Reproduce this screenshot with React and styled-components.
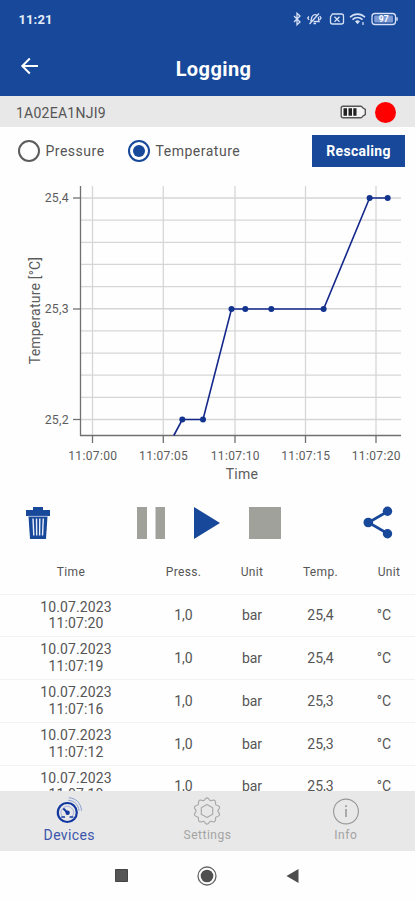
import React, { useState } from 'react';
import styled, { createGlobalStyle, ThemeProvider } from 'styled-components';

const theme = {
  blue: '#174899',
  line: '#14288c',
  grey: '#e8e8e8',
  disabled: '#a1a19c',
  muted: '#a3a3a3',
  text: '#555',
};

const GlobalStyle = createGlobalStyle`
  * {
    box-sizing: border-box;
  }

  body {
    margin: 0;
    background: #fefefe;
    font-family: Roboto, 'Liberation Sans', sans-serif;
    color: ${theme.text};
  }

  button {
    padding: 0;
    border: 0;
    background: none;
    font-family: inherit;
    color: inherit;
    cursor: pointer;
  }

  svg {
    display: block;
  }
`;

const Screen = styled.div`
  display: flex;
  flex-direction: column;
  width: 415px;
  height: 900px;
  overflow: hidden;
`;

// Header
const Header = styled.header`
  flex: 0 0 96px;
  background: ${({ theme }) => theme.blue};
  color: #fff;
`;

const StatusBar = styled.div`
  display: flex;
  align-items: center;
  justify-content: space-between;
  height: 38px;
  padding: 0 17px 0 18.5px;
`;

const Clock = styled.span`
  font-size: 13px;
  font-weight: 700;
  letter-spacing: 0.1px;
  color: #e6edfb;
`;

const TitleBar = styled.div`
  display: grid;
  grid-template-columns: 60px 1fr 60px;
  align-items: center;
  height: 58px;
`;

const BackButton = styled.button`
  padding: 0 0 3px 20px;
`;

const Title = styled.h1`
  margin: 0;
  padding: 3px 0 0 12px;
  font-size: 20px;
  font-weight: 700;
  letter-spacing: 0.4px;
  text-align: center;
`;

// Device
const DeviceBar = styled.div`
  display: flex;
  align-items: center;
  flex: 0 0 31px;
  padding: 1px 19px 0 16px;
  background: ${({ theme }) => theme.grey};
`;

const DeviceName = styled.span`
  flex: 1;
  padding-top: 1px;
  font-size: 14px;
  letter-spacing: 0.25px;
`;

const RecordDot = styled.span`
  width: 21px;
  height: 21px;
  margin-left: 8px;
  border-radius: 50%;
  background: #fe0000;
`;

// Source selection
const SourceRow = styled.div`
  display: flex;
  align-items: center;
  flex: 0 0 47px;
  padding: 0 10px 0 17.5px;
`;

const RadioLabel = styled.button`
  display: flex;
  align-items: center;
  gap: 6px;
  margin-right: 23px;
  font-size: 14px;
  letter-spacing: ${({ $spacing }) => $spacing};
`;

const RadioCircle = styled.span`
  display: flex;
  align-items: center;
  justify-content: center;
  width: 22px;
  height: 22px;
  border: 2px solid ${({ theme, $checked }) => ($checked ? theme.blue : '#5c5c5c')};
  border-radius: 50%;

  &::after {
    content: '';
    width: 12px;
    height: 12px;
    border-radius: 50%;
    background: ${({ theme, $checked }) => ($checked ? theme.blue : 'transparent')};
  }
`;

const RescaleButton = styled.button`
  width: 93px;
  height: 32px;
  margin-left: auto;
  background: ${({ theme }) => theme.blue};
  color: #fff;
  font-size: 14px;
  font-weight: 700;
  letter-spacing: 0.3px;
`;

const ChartBox = styled.div`
  flex: 0 0 318px;
  height: 318px;

  text {
    font-family: Roboto, 'Liberation Sans', sans-serif;
    fill: #5c5c5c;
  }
`;

// Controls
const Controls = styled.div`
  display: grid;
  grid-template-columns: 75px 1fr 75px;
  align-items: center;
  justify-items: center;
  flex: 0 0 61px;
`;

const Transport = styled.div`
  display: flex;
  align-items: center;
  gap: 29px;
  padding-left: 3px;
`;

// Table
const TableArea = styled.div`
  flex: 1;
  min-height: 0;
  overflow: hidden;
`;

const TableRow = styled.div`
  display: grid;
  grid-template-columns: 152px 63px 74px 63px 63px;
  align-items: center;
  height: 42.75px;
  border-top: 1px solid #f2f2f2;
  font-size: 14px;
  text-align: center;
`;

const TableHead = styled(TableRow)`
  height: 40.5px;
  padding: 0 0 3px;
  border-top: 0;
  font-size: 12px;
  letter-spacing: 0.35px;
`;

const Cell = styled.span`
  padding-left: ${({ $left }) => $left || '0'};
  padding-right: ${({ $right }) => $right || '0'};
`;

const TimeCell = styled(Cell)`
  line-height: 16.8px;
  letter-spacing: 0.1px;
`;

// Bottom
const TabBar = styled.nav`
  display: grid;
  grid-template-columns: repeat(3, 1fr);
  flex: 0 0 60px;
  background: ${({ theme }) => theme.grey};
`;

const Tab = styled.button`
  display: flex;
  flex-direction: column;
  align-items: center;
  gap: 2px;
  padding-top: 6px;
  font-size: ${({ $active }) => ($active ? '14px' : '12px')};
  line-height: 17px;
  letter-spacing: ${({ $active }) => ($active ? '0.35px' : '0.5px')};
  color: ${({ theme, $active }) => ($active ? '#3b56ab' : theme.muted)};
`;

const SystemBar = styled.div`
  display: flex;
  align-items: center;
  justify-content: center;
  gap: 69px;
  flex: 0 0 49px;
  padding-right: 1px;
`;

const StatusIcons = () => (
  <svg width="106" height="16" viewBox="291 11 106 16" fill="none" stroke="#d5e0f6" strokeWidth="1.3">
    <path d="M293 16l6 6-3 2.8V13.2l3 2.8-6 6" />
    <path d="M309.5 21.5c1-1 .8-2.5 1.2-4 .7-2.4 3-3.5 5-2.4M317.3 17c.5 1.700-.1 3 .8 4.500h-5.600M312.500 23.500h2.500M308.500 24l9.500-10.500M308 16.500l-1.300 1.500 1.300 2M318.700 16l1.300 2-1.300 2" />
    <path d="M331.500 14h9q2 0 2 2v6q0 2-2 2h-9q-2 0-2-2v-5z" />
    <path d="M333.500 16.700l5 5M338.500 16.700l-5 5" />
    <path d="M349 17.300c4.300-4.200 10.700-4.200 15 0M351.500 19.700c3-2.800 7-2.800 10 0" strokeWidth="1.600" />
    <path d="M354 21.200q2.500-2 5 0l-2.500 3z" fill="#d5e0f6" stroke="none" />
    <path d="M362 22v3" />
    <rect x="371" y="13.500" width="23.500" height="11" rx="3" />
    <rect x="373.200" y="15.500" width="18.800" height="7" rx="1" fill="#7f9bd4" stroke="none" />
    <path d="M396 17.300v3.500" strokeWidth="1.500" />
    <text
      x="382.700"
      y="22.200"
      textAnchor="middle"
      fontFamily="Roboto, sans-serif"
      fontSize="8.500"
      fontWeight="700"
      fill="#fff"
      stroke="none"
    >
      97
    </text>
  </svg>
);

const BackIcon = () => (
  <svg width="20" height="18" viewBox="0 0 20 18" fill="none" stroke="#fff" strokeWidth="2">
    <path d="M18 9H2.500M9.800 1.500L2.300 9l7.500 7.500" />
  </svg>
);

const BatteryIcon = () => (
  <svg width="27" height="14" viewBox="0 0 27 14">
    <path
      d="M3 1.200h17.500q1.500 0 2.200 1.600l2.600 1.700v5l-2.600 1.700q-.7 1.600-2.200 1.600H3q-1.800 0-1.800-1.800V3Q1.200 1.200 3 1.200z"
      fill="#f4f4f4"
      stroke="#555"
      strokeWidth="1.400"
    />
    <path d="M3.500 3.200H7v7.600H3.500zM8.500 3.200H12v7.600H8.500zM13.300 3.200h3.200v7.600h-3.200z" fill="#222" />
  </svg>
);

const TrashIcon = () => (
  <svg width="26" height="34" viewBox="0 0 26 34">
    <path d="M8 1h10v3h7v6H1V4h7z" fill={theme.blue} />
    <path d="M3.500 10.500h19L21 33H5z" fill={theme.blue} />
    <path
      d="M8 12.500l.8 17M11.500 12.500l.2 17M14.800 12.500l-.2 17M18.300 12.500l-.8 17"
      stroke="#e9effa"
      strokeWidth="1.400"
    />
    <path d="M3 10.300h20" stroke="#9db2da" strokeWidth="0.800" />
  </svg>
);

const ShareIcon = () => (
  <svg width="30" height="33" viewBox="0 0 30 33" fill={theme.blue}>
    <path d="M24.500 5.500L5.500 16.500l19 11" fill="none" stroke={theme.blue} strokeWidth="2.600" />
    <circle cx="24.500" cy="5.300" r="4.700" />
    <circle cx="5.300" cy="16.500" r="4.800" />
    <circle cx="24.500" cy="27.700" r="4.700" />
  </svg>
);

const DevicesIcon = () => (
  <svg width="28" height="28" viewBox="1.200 0.500 28 28" fill="none" stroke="#1238a0">
    <circle cx="13.500" cy="16" r="9.500" strokeWidth="2.200" />
    <path d="M8.300 19.500a6.200 6.200 0 1 1 10.400 0" strokeWidth="1" stroke="#a3b1da" />
    <path d="M7.500 20.500h3.700M15.800 20.500h3.700" strokeWidth="1.500" />
    <path d="M9.500 12l4 4" strokeWidth="1.900" />
    <circle cx="13.800" cy="16.300" r="2.200" fill="#1238a0" stroke="none" />
    <path d="M14.500 3.800c6 .2 10.200 4.500 10.700 10.500M15 1.300c7 .2 12.300 5.500 12.700 13" strokeWidth="0.900" stroke="#8296cf" />
  </svg>
);

// Scalloped outline of the settings gear
const gearPath = () => {
  const points = [];
  for (let i = 0; i <= 120; i += 1) {
    const a = (i / 120) * Math.PI * 2;
    const r = 12 + 1.1 * Math.cos(a * 10);
    points.push(`${(14 + r * Math.sin(a)).toFixed(2)} ${(14 - r * Math.cos(a)).toFixed(2)}`);
  }
  return `M${points.join('L')}Z`;
};

const SettingsIcon = () => (
  <svg width="28" height="28" viewBox="0 0 28 28" fill="none" stroke="#aaa" strokeWidth="1.200">
    <path d={gearPath()} />
    <path d="M14 7.500l5.700 3.200v6.600L14 20.500l-5.700-3.200v-6.600z" strokeLinejoin="round" />
  </svg>
);

const InfoIcon = () => (
  <svg width="28" height="28" viewBox="0 0 28 28" fill="none" stroke="#969696">
    <circle cx="14" cy="14.500" r="12.400" strokeWidth="1.100" />
    <path d="M14 12v8" strokeWidth="1.500" />
    <path d="M14 8.200v1.900" strokeWidth="1.700" />
  </svg>
);

const xTicks = [
  { x: 92.5, label: '11:07:00' },
  { x: 163.3, label: '11:07:05' },
  { x: 235, label: '11:07:10' },
  { x: 305.5, label: '11:07:15' },
  { x: 376, label: '11:07:20' },
];

const yTicks = [
  { y: 24, label: '25,4' },
  { y: 135, label: '25,3' },
  { y: 245.5, label: '25,2' },
];

const gridLines = Array.from({ length: 11 }, (_, i) => 24 + i * 22.15);

const points = [
  [182.3, 245.5],
  [203, 245.5],
  [231.5, 135],
  [245.3, 135],
  [271.3, 135],
  [323.6, 135],
  [369.6, 24],
  [387.7, 24],
];

const TemperatureChart = () => (
  <svg width="415" height="318" viewBox="0 0 415 318">
    <g stroke="#d6d6d6" strokeWidth="1.300">
      {gridLines.map((y) => (
        <line key={y} x1="81" x2="401" y1={y} y2={y} />
      ))}
      {xTicks.map(({ x }) => (
        <line key={x} x1={x} x2={x} y1="12" y2="261" />
      ))}
    </g>
    <path d="M80.500 12v249.700M80 261.500h321" stroke="#707070" strokeWidth="1.300" fill="none" />
    {yTicks.map(({ y, label }) => (
      <g key={label}>
        <line x1="73" x2="80" y1={y} y2={y} stroke="#707070" strokeWidth="1.300" />
        <text x="69" y={y + 4.2} fontSize="12.300" letterSpacing="0.300" textAnchor="end">
          {label}
        </text>
      </g>
    ))}
    {xTicks.map(({ x, label }) => (
      <g key={label}>
        <line x1={x} x2={x} y1="262" y2="269" stroke="#707070" strokeWidth="1.300" />
        <text x={x + 0.3} y="285.500" fontSize="12" letterSpacing="0.350" textAnchor="middle">
          {label}
        </text>
      </g>
    ))}
    <text x="242" y="304.500" fontSize="14" letterSpacing="0.300" textAnchor="middle">
      Time
    </text>
    <text transform="translate(40 136.500) rotate(-90)" fontSize="14" letterSpacing="0.200" textAnchor="middle">
      Temperature [°C]
    </text>
    <polyline
      points={[[173.8, 261.5], ...points].map((p) => p.join(',')).join(' ')}
      fill="none"
      stroke={theme.line}
      strokeWidth="1.600"
    />
    {points.map(([x, y]) => (
      <circle key={x} cx={x} cy={y} r="3" fill="#12348f" />
    ))}
  </svg>
);

const rows = [
  { date: '10.07.2023', time: '11:07:20', press: '1,0', temp: '25,4' },
  { date: '10.07.2023', time: '11:07:19', press: '1,0', temp: '25,4' },
  { date: '10.07.2023', time: '11:07:16', press: '1,0', temp: '25,3' },
  { date: '10.07.2023', time: '11:07:12', press: '1,0', temp: '25,3' },
  { date: '10.07.2023', time: '11:07:10', press: '1,0', temp: '25,3' },
];

const App = () => {
  const [source, setSource] = useState('temperature');

  return (
    <ThemeProvider theme={theme}>
      <GlobalStyle />
      <Screen>
        <Header>
          <StatusBar>
            <Clock>11:21</Clock>
            <StatusIcons />
          </StatusBar>
          <TitleBar>
            <BackButton aria-label="Back">
              <BackIcon />
            </BackButton>
            <Title>Logging</Title>
          </TitleBar>
        </Header>

        <DeviceBar>
          <DeviceName>1A02EA1NJI9</DeviceName>
          <BatteryIcon />
          <RecordDot />
        </DeviceBar>

        <SourceRow>
          <RadioLabel $spacing="0.500px" onClick={() => setSource('pressure')}>
            <RadioCircle $checked={source === 'pressure'} />
            Pressure
          </RadioLabel>
          <RadioLabel $spacing="0.500px" onClick={() => setSource('temperature')}>
            <RadioCircle $checked={source === 'temperature'} />
            Temperature
          </RadioLabel>
          <RescaleButton>Rescaling</RescaleButton>
        </SourceRow>

        <ChartBox>
          <TemperatureChart />
        </ChartBox>

        <Controls>
          <button aria-label="Delete">
            <TrashIcon />
          </button>
          <Transport>
            <svg width="28" height="32" viewBox="0 0 28 32" fill={theme.disabled}>
              <path d="M0 0h10v32H0zM18.500 0h9.500v32h-9.500z" />
            </svg>
            <svg width="26" height="32" viewBox="0 0 26 32" fill={theme.blue}>
              <path d="M0 0l26 16L0 32z" />
            </svg>
            <svg width="32" height="32" viewBox="0 0 32 32" fill={theme.disabled}>
              <path d="M0 0h32v32H0z" />
            </svg>
          </Transport>
          <button aria-label="Share">
            <ShareIcon />
          </button>
        </Controls>

        <TableArea>
          <TableHead>
            <Cell $right="10px">Time</Cell>
            <Cell>Press.</Cell>
            <Cell>Unit</Cell>
            <Cell>Temp.</Cell>
            <Cell $left="11px">Unit</Cell>
          </TableHead>
          {rows.map((row) => (
            <TableRow key={row.time}>
              <TimeCell>
                {row.date}
                <br />
                {row.time}
              </TimeCell>
              <Cell>{row.press}</Cell>
              <Cell>bar</Cell>
              <Cell>{row.temp}</Cell>
              <Cell $left="1px">°C</Cell>
            </TableRow>
          ))}
        </TableArea>

        <TabBar>
          <Tab $active>
            <DevicesIcon />
            Devices
          </Tab>
          <Tab>
            <SettingsIcon />
            Settings
          </Tab>
          <Tab>
            <InfoIcon />
            Info
          </Tab>
        </TabBar>

        <SystemBar>
          <svg width="13" height="13" viewBox="0 0 13 13">
            <path d="M.5.500h12v12H.5z" fill="#555" stroke="#444" />
          </svg>
          <svg width="20" height="20" viewBox="0 0 20 20">
            <circle cx="10" cy="10" r="9" fill="none" stroke="#666" strokeWidth="1.300" />
            <circle cx="10" cy="10" r="6.300" fill="#505050" />
          </svg>
          <svg width="13" height="14" viewBox="0 0 13 14">
            <path d="M12.500 0v14L.5 7z" fill="#4d4d4d" />
          </svg>
        </SystemBar>
      </Screen>
    </ThemeProvider>
  );
};

export default App;
